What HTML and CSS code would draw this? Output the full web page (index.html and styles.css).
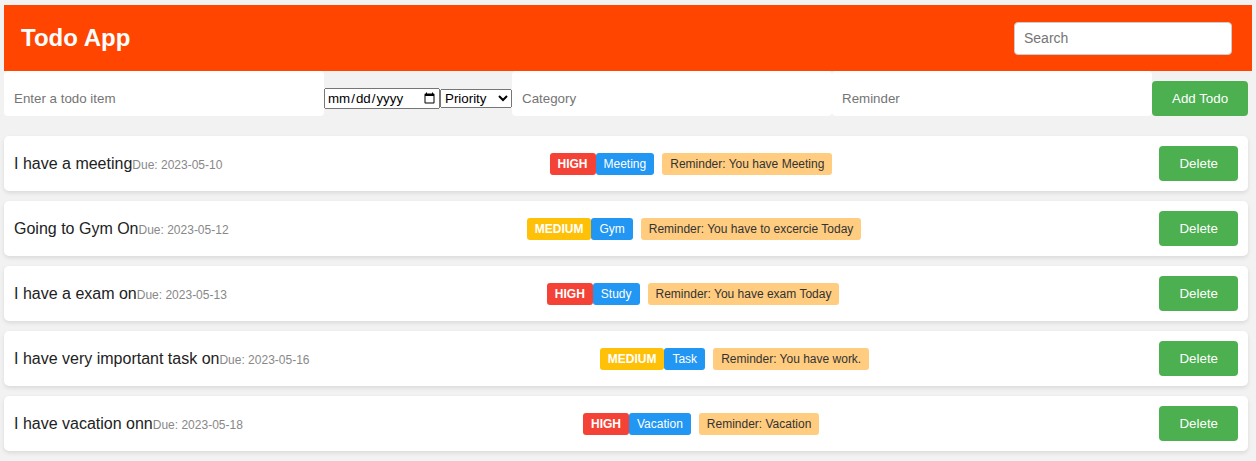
FILE: index.html
```html
<!DOCTYPE html>
<html lang="en">
<head>
<meta charset="utf-8">
<title>Todo App</title>
<link rel="stylesheet" href="styles.css">
</head>
<body>
<div class="app">
  <header class="header">
    <h1 class="title">Todo App</h1>
    <input class="search" type="text" placeholder="Search">
  </header>
  <form class="add-form"><input class="field" type="text" placeholder="Enter a todo item"><input class="date" type="date"><select class="priority"><option>Priority</option><option>High</option><option>Medium</option><option>Low</option></select><input class="field" type="text" placeholder="Category"><input class="field" type="text" placeholder="Reminder"><button class="btn" type="button">Add Todo</button></form>
  <ul class="list">
    <li class="card">
      <div class="text">I have a meeting<span class="due">Due: 2023-05-10</span></div>
      <div class="tags"><span class="badge high">HIGH</span><span class="badge cat">Meeting</span><span class="reminder">Reminder: You have Meeting</span></div>
      <button class="btn" type="button">Delete</button>
    </li>
    <li class="card">
      <div class="text">Going to Gym On<span class="due">Due: 2023-05-12</span></div>
      <div class="tags"><span class="badge medium">MEDIUM</span><span class="badge cat">Gym</span><span class="reminder">Reminder: You have to excercie Today</span></div>
      <button class="btn" type="button">Delete</button>
    </li>
    <li class="card">
      <div class="text">I have a exam on<span class="due">Due: 2023-05-13</span></div>
      <div class="tags"><span class="badge high">HIGH</span><span class="badge cat">Study</span><span class="reminder">Reminder: You have exam Today</span></div>
      <button class="btn" type="button">Delete</button>
    </li>
    <li class="card">
      <div class="text">I have very important task on<span class="due">Due: 2023-05-16</span></div>
      <div class="tags"><span class="badge medium">MEDIUM</span><span class="badge cat">Task</span><span class="reminder">Reminder: You have work.</span></div>
      <button class="btn" type="button">Delete</button>
    </li>
    <li class="card">
      <div class="text">I have vacation onn<span class="due">Due: 2023-05-18</span></div>
      <div class="tags"><span class="badge high">HIGH</span><span class="badge cat">Vacation</span><span class="reminder">Reminder: Vacation</span></div>
      <button class="btn" type="button">Delete</button>
    </li>
  </ul>
</div>
</body>
</html>
```
FILE: styles.css
```css
* { box-sizing: border-box; }
html, body { margin: 0; padding: 0; }
body {
  background: #f2f2f2;
  font-family: "Liberation Sans", Arial, sans-serif;
  color: #222;
}
.app {
  padding: 5px 4px 0 4px;
}
.header {
  display: flex;
  align-items: center;
  justify-content: space-between;
  height: 66px;
  padding: 0 20px 0 17px;
  background: #ff4500;
}
.title {
  margin: 0;
  color: #fff;
  font-size: 24px;
  font-weight: bold;
  line-height: 1;
}
.search {
  width: 218px;
  height: 33px;
  padding: 0 9px;
  border: 1px solid #ccc;
  border-radius: 4px;
  font-family: "Liberation Sans", Arial, sans-serif;
  font-size: 14px;
  background: #fff;
  outline: none;
}
.search::placeholder, .field::placeholder { color: #757575; }
.add-form {
  display: flex;
  align-items: baseline;
  margin: 0 0 20px 0;
}
.field {
  width: 320px;
  height: 45px;
  padding: 20px 10px 10px;
  border: none;
  border-radius: 4px;
  background: #fff;
  font-family: "Liberation Sans", Arial, sans-serif;
  font-size: 13.33px;
  outline: none;
}
.date, .priority {
  font-family: "Liberation Sans", Arial, sans-serif;
  font-size: 13.33px;
}
.date { width: 116px; }
.priority { width: 72px; }
.btn {
  padding: 10px 20px;
  border: none;
  border-radius: 4px;
  background: #4caf50;
  color: #fff;
  font-family: "Liberation Sans", Arial, sans-serif;
  font-size: 13.33px;
  line-height: 15px;
  cursor: pointer;
}
.list {
  list-style: none;
  margin: 0 4px 0 0;
  padding: 0;
}
.card {
  display: flex;
  align-items: center;
  justify-content: space-between;
  padding: 10px;
  margin-bottom: 10px;
  background: #fff;
  border-radius: 5px;
  box-shadow: 0 2px 4px rgba(0, 0, 0, 0.1);
}
.text {
  font-size: 16px;
  color: #222;
}
.due {
  font-size: 12px;
  color: #888;
}
.tags {
  display: flex;
  align-items: center;
}
.badge, .reminder {
  padding: 4px 8px;
  border-radius: 3px;
  font-size: 12px;
  line-height: 14px;
}
.badge { color: #fff; }
.high { background: #f44336; font-weight: bold; }
.medium { background: #ffc107; font-weight: bold; }
.cat { background: #2196f3; }
.reminder {
  margin-left: 8px;
  background: #ffcc80;
  color: #333;
}
```
